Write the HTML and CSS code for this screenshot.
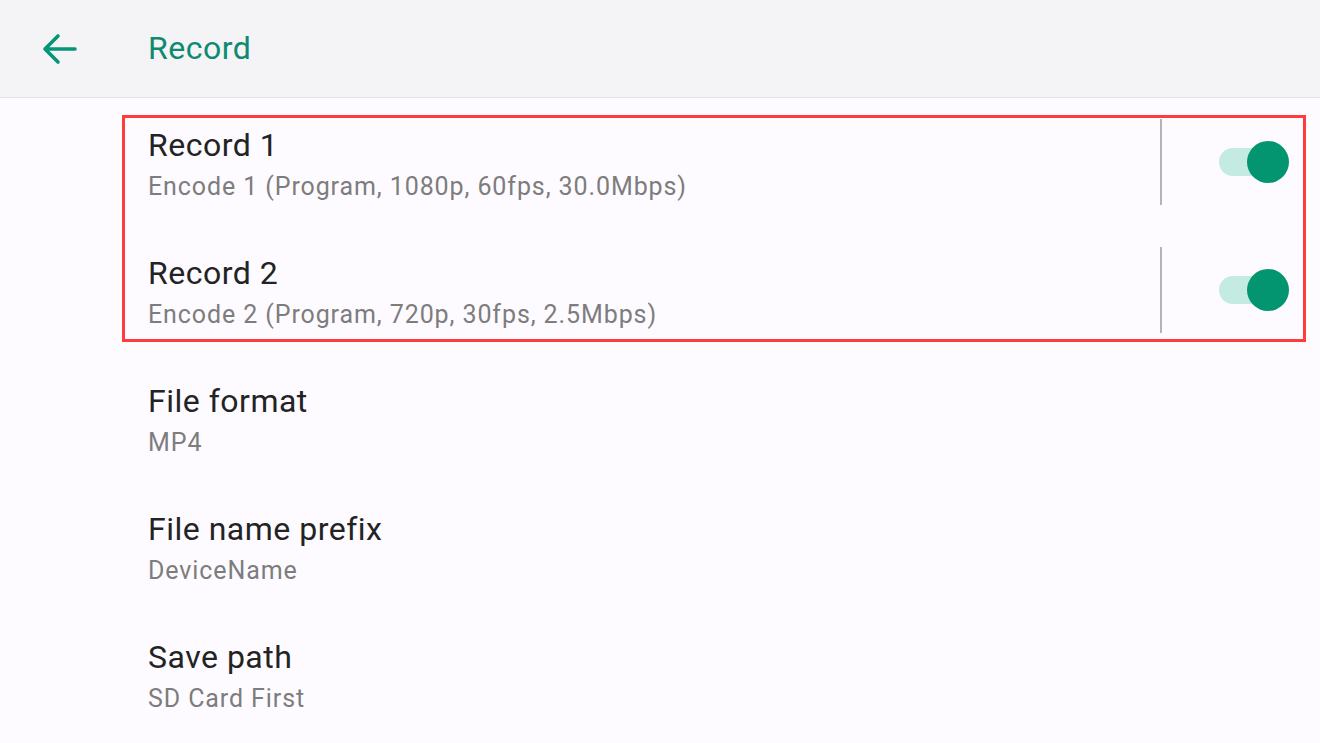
FILE: index.html
```html
<!DOCTYPE html>
<html>
<head>
<meta charset="utf-8">
<link rel="stylesheet" href="styles.css">
</head>
<body>
<div class="page">
  <header class="appbar">
    <div class="back">
      <svg width="36" height="32" viewBox="0 0 36 32"><path d="M34 16H4M17 3L4 16l13 13" fill="none" stroke="#05967a" stroke-width="3.6" stroke-linecap="round" stroke-linejoin="round"/></svg>
    </div>
    <div class="apptitle">Record</div>
  </header>
  <main class="list">
    <div class="row">
      <div class="text">
        <div class="title">Record 1</div>
        <div class="sub">Encode 1 (Program, 1080p, 60fps, 30.0Mbps)</div>
      </div>
      <div class="divider"></div>
      <div class="switch"><div class="track"></div><div class="thumb"></div></div>
    </div>
    <div class="row">
      <div class="text">
        <div class="title">Record 2</div>
        <div class="sub">Encode 2 (Program, 720p, 30fps, 2.5Mbps)</div>
      </div>
      <div class="divider"></div>
      <div class="switch"><div class="track"></div><div class="thumb"></div></div>
    </div>
    <div class="row">
      <div class="text">
        <div class="title">File format</div>
        <div class="sub">MP4</div>
      </div>
    </div>
    <div class="row">
      <div class="text">
        <div class="title">File name prefix</div>
        <div class="sub">DeviceName</div>
      </div>
    </div>
    <div class="row">
      <div class="text">
        <div class="title">Save path</div>
        <div class="sub">SD Card First</div>
      </div>
    </div>
    <div class="highlight"></div>
  </main>
</div>
</body>
</html>
```
FILE: styles.css
```css
* { box-sizing: border-box; }
html, body { margin: 0; padding: 0; }
body {
  width: 1320px;
  height: 743px;
  overflow: hidden;
  background: #fdfbff;
  font-family: Roboto, "Noto Sans", sans-serif;
}
.page { position: relative; }
.appbar {
  height: 98px;
  background: #f4f3f6;
  border-bottom: 1px solid #e2e1e4;
  display: flex;
  align-items: center;
}
.back {
  width: 148px;
  padding-left: 41px;
  display: flex;
  align-items: center;
}
.back svg { display: block; }
.apptitle {
  font-size: 32px;
  letter-spacing: 0.5px;
  color: #0e8a70;
  line-height: 1;
  padding-bottom: 1px;
}
.list { position: relative; }
.row {
  height: 128px;
  display: flex;
  align-items: center;
  padding-left: 148px;
}
.text {
  flex: 1;
  display: flex;
  flex-direction: column;
  padding-top: 7px;
}
.title {
  font-size: 32px;
  letter-spacing: 0.5px;
  color: #232323;
  line-height: 38px;
}
.sub {
  font-size: 25px;
  letter-spacing: 0.9px;
  color: #7d7d7d;
  line-height: 36px;
  margin-top: 5px;
}
.divider {
  width: 2px;
  height: 86px;
  background: #b3b3b3;
  margin-right: 57px;
}
.switch {
  position: relative;
  width: 70px;
  height: 42px;
  margin-right: 31px;
}
.track {
  position: absolute;
  left: 0;
  top: 7px;
  width: 62px;
  height: 28px;
  border-radius: 14px;
  background: #c4ebe1;
}
.thumb {
  position: absolute;
  right: 0;
  top: 0;
  width: 42px;
  height: 42px;
  border-radius: 50%;
  background: #03956f;
}
.highlight {
  position: absolute;
  left: 122px;
  top: 17px;
  width: 1184px;
  height: 227px;
  border: 3px solid #ff3b3b;
}
```
